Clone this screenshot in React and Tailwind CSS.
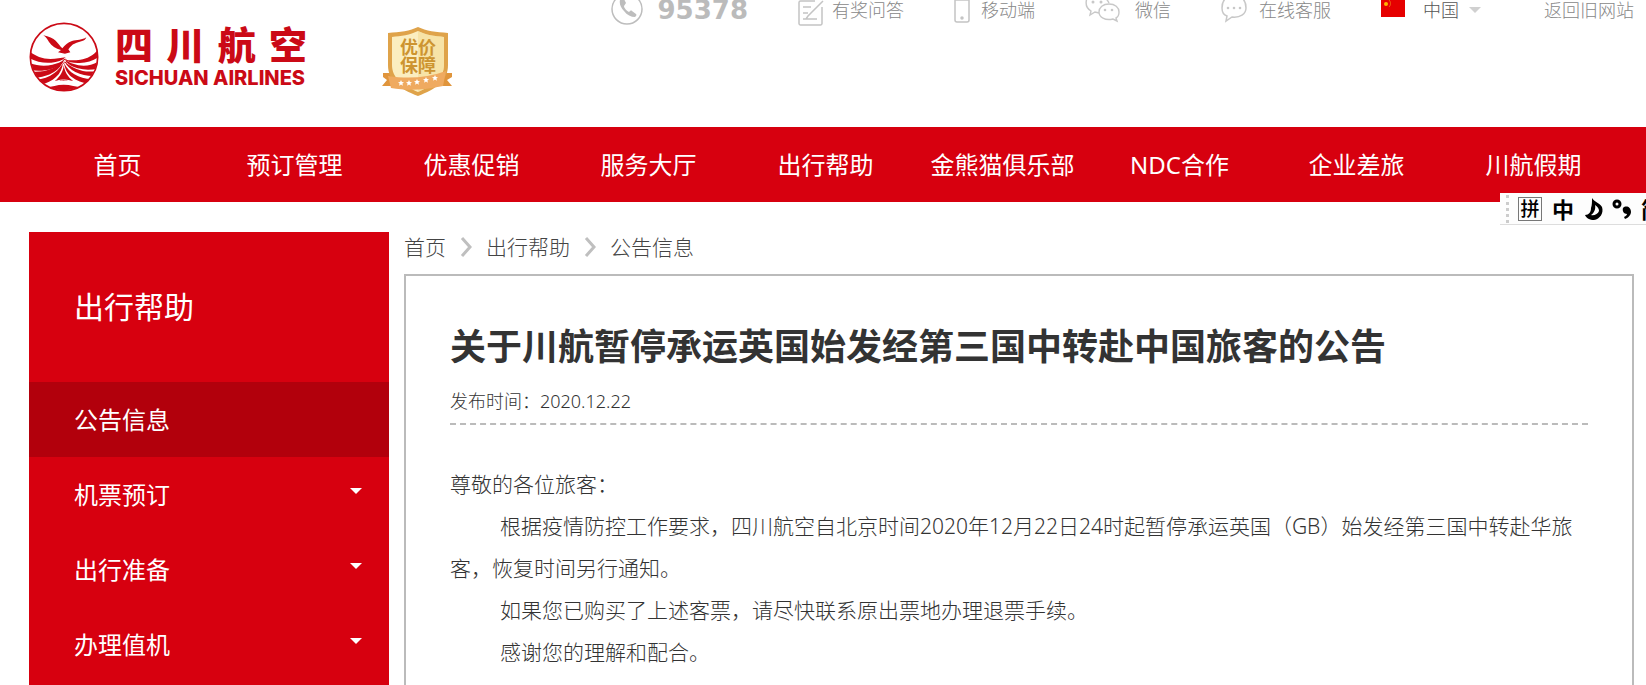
const navItems = [
  "首页",
  "预订管理",
  "优惠促销",
  "服务大厅",
  "出行帮助",
  "金熊猫俱乐部",
  "NDC合作",
  "企业差旅",
  "川航假期",
];

const sideItems = [
  { label: "公告信息", active: true },
  { label: "机票预订" },
  { label: "出行准备" },
  { label: "办理值机" },
];

const Logo = () => (
  <a href="#" className="flex items-start text-[#cb0a16]">
    <svg viewBox="86 65 210 210" className="h-[70px] w-[70px]" fill="none">
      <defs>
        <clipPath id="logoClip">
          <circle cx="191" cy="170" r="100" />
        </clipPath>
      </defs>
      <circle cx="191" cy="170" r="101" stroke="currentColor" strokeWidth="5" />
      {/* bird */}
      <path
        fill="currentColor"
        d="M129 105c16 3 30 9 37 16 8 8 12 15 20 23 8-9 16-18 29-22 14-3 31-3 43-11-3 12-20 13-31 17-13 5-17 12-23 19l6 9-16 4-21-4 9-7c-16-4-28-12-36-24-4-7-8-14-17-20z"
      />
      {/* waves */}
      <g clipPath="url(#logoClip)" fill="currentColor">
        <path d="M84 148c14 17 40 27 66 28 18 0 32-3 46-5-10 10-25 14-43 16-25 2-49-3-69-15z" />
        <path d="M84 186c24 11 50 12 72 7 14-3 26-9 37-15-10 13-22 22-38 27-22 7-43 8-64 4z" />
        <path d="M92 214c24 2 45-1 65-10 13-6 23-14 33-24-6 15-15 27-29 35-18 11-36 16-60 17z" />
        <path d="M106 238c22-1 40-8 56-20 11-8 19-18 26-31-2 18-9 32-21 43-13 12-27 19-47 24z" />
        <path d="M298 142c-16 22-35 33-58 36-17 3-31 2-46 1 10 6 26 10 44 9 23-1 43-8 60-20z" />
        <path d="M298 181c-20 14-42 18-64 14-15-3-27-8-40-15 10 13 22 20 38 24 23 6 43 5 62 0z" />
        <path d="M292 211c-23 5-44 3-63-5-14-5-25-12-37-24 8 16 19 26 33 33 19 9 38 13 59 12z" />
        <path d="M280 236c-23 1-41-4-58-14-13-8-22-18-31-34 3 19 10 31 22 41 16 12 33 19 55 21z" />
        <path d="M190 195c-1 18-10 33-26 47h54c-16-12-25-28-28-47z" />
        <path d="M138 262c17-3 31-9 52-9s37 6 54 9l-20 12h-66z" />
      </g>
      <path stroke="#fff" strokeWidth="3" d="M154 248c12-6 24-9 36-9s28 4 41 9" />
      <path stroke="currentColor" strokeWidth="3" d="M190 190c-8-8 2-16 8-12s-1 11-6 8" />
    </svg>
    <span className="ml-4 block">
      <span className="flex w-[192px] justify-between text-[38px] leading-[44px] font-black">
        <span>四</span>
        <span>川</span>
        <span>航</span>
        <span>空</span>
      </span>
      <span className="block font-[Inter,sans-serif] text-xl leading-6 font-extrabold">
        SICHUAN AIRLINES
      </span>
    </span>
  </a>
);

const Badge = () => (
  <svg viewBox="0 0 72 72" className="ml-[74px] mt-1 h-[72px] w-[72px]">
    <path fill="#e0953c" d="M2 47h12v13H1l5-6-4-3zM71 47H59v13h12l-5-6 5-3z" />
    <path fill="#dfa34a" d="M37 1c8 4 18 5 30 6v32c0 16-12 24-30 31C19 63 7 55 7 39V7c12-1 22-2 30-6z" />
    <path fill="#fbeec0" d="M37 5c8 4 17 5 26 6v28c0 13-10 20-26 27C21 59 11 52 11 39V11c9-1 18-2 26-6z" />
    <path fill="#f2d48a" d="M37 5c8 4 17 5 26 6v28c0 13-10 20-26 27z" opacity=".45" />
    <text textAnchor="middle" fontSize="18" fontWeight="700" fill="#cd9430">
      <tspan x="37" y="28">
        优价
      </tspan>
      <tspan x="37" y="46">
        保障
      </tspan>
    </text>
    <path fill="#efaa60" d="M7 50c20 3 39 2 58-5l-3 15c-18 4-35 5-52 2z" />
    <g fill="#fff">
      {[
        [20, 57],
        [28, 57],
        [36, 56],
        [45, 54],
        [54, 52],
      ].map(([x, y]) => (
        <path
          key={x}
          transform={`translate(${x} ${y})`}
          d="M0-3l.9 2 2.1.2-1.6 1.4.5 2.1L0 1.600l-1.900 1.100.5-2.100L-3-.8l2.100-.2z"
        />
      ))}
    </g>
  </svg>
);

const TopLinks = () => (
  <div className="ml-auto flex items-start gap-[50px] text-[18px] leading-5 font-light whitespace-nowrap text-[#888]">
    <a href="tel:95378" className="flex items-start gap-[15px]">
      <svg viewBox="0 0 32 26" className="h-[26px] w-8" fill="none">
        <circle cx="16" cy="9" r="15" stroke="#bdbdbd" strokeWidth="1.500" />
        <path
          fill="#bdbdbd"
          d="M9 0c-1 4 1 8 4 11 3 4 7 6 11 6 1-1 2-2 1-3l-4-3c-1-1-2 0-3 1-2-1-5-4-5-6l2-3-2-4z"
        />
      </svg>
      <span className="font-['DejaVu_Sans',sans-serif] text-[26px] font-bold text-[#bbb]">
        95378
      </span>
    </a>
    <a href="#" className="flex items-start gap-2">
      <svg viewBox="0 0 26 26" className="h-[26px] w-[26px]" fill="none" stroke="#c4c4c4" strokeWidth="1.500">
        <path d="M17 1H2.500A1.500 1.500 0 0 0 1 2.500v21A1.500 1.500 0 0 0 2.500 25h20a1.500 1.500 0 0 0 1.500-1.500V7M25 1L10 16l-2 3M5 7h8M5 13h5M5 19h14" />
      </svg>
      有奖问答
    </a>
    <a href="#" className="flex items-start gap-[11px]">
      <svg viewBox="0 0 16 24" className="h-6 w-4" fill="none" stroke="#c4c4c4" strokeWidth="1.500">
        <rect x="1" y="-4" width="14" height="26" rx="2" />
        <path d="M1 0h14" />
        <circle cx="8" cy="18" r="1" fill="#bdbdbd" />
      </svg>
      移动端
    </a>
    <a href="#" className="flex items-start gap-[15px]">
      <svg viewBox="0 0 35 23" className="h-[23px] w-[35px]" fill="none" stroke="#c8c8c8" strokeWidth="1.400">
        <path d="M2-2c-2 6-1 10 4 13l-1 4 5-3 4 1M24 3c-1-2-2-4-5-6" />
        <path d="M24 4c6 0 10 3.500 10 8 0 3-1 5-3 6l1 3-4-2c-8 2-14-2-14-7 0-4.500 4-8 10-8z" />
        <g fill="#c8c8c8" stroke="none">
          <circle cx="8" cy="2" r="1.500" />
          <circle cx="16" cy="2" r="1.500" />
          <circle cx="20" cy="10" r="1.300" />
          <circle cx="27" cy="10" r="1.300" />
        </g>
      </svg>
      微信
    </a>
    <a href="#" className="flex items-start gap-3">
      <svg viewBox="0 0 26 23" className="h-[23px] w-[26px]" fill="none" stroke="#c8c8c8" strokeWidth="1.500">
        <path d="M4-1C2 1 1 4 1 8c0 4 2 7 5 8l-1 5 6-4c8 1 14-3 14-9 0-4-1-7-3-9" />
        <g fill="#c8c8c8" stroke="none">
          <circle cx="7" cy="8" r="1.300" />
          <circle cx="13" cy="8" r="1.300" />
          <circle cx="19" cy="8" r="1.300" />
        </g>
      </svg>
      在线客服
    </a>
    <button type="button" className="flex items-start text-[#555]">
      <svg viewBox="0 0 24 17" className="mr-[18px] h-[17px] w-6">
        <rect width="24" height="17" fill="#e60000" />
        <circle cx="5" cy="4" r="2" fill="#ffb400" />
        <path stroke="#f06a10" strokeWidth="1" fill="none" d="M8 0c2 2 2 5 0 7" />
      </svg>
      中国
      <svg viewBox="0 0 12 6" className="ml-[10px] mt-[7px] h-[6px] w-3">
        <path fill="#d0d0d0" d="M0 0h12L6 6z" />
      </svg>
    </button>
    <a href="#" className="ml-[13px]">
      返回旧网站
    </a>
  </div>
);

const InputBar = () => (
  <div className="absolute top-full right-0 -mt-[9px] flex h-8 w-[146px] items-center overflow-hidden border-b border-[#ddd] bg-[#fdfdfd] pl-[6px] text-[22px] leading-6 font-bold whitespace-nowrap text-black">
    <span className="mr-[9px] h-7 border-l-3 border-dotted border-[#ccc]" />
    <span className="flex h-6 w-6 shrink-0 items-center justify-center border border-[#777] text-[19px] font-medium">
      拼
    </span>
    <span className="ml-[10px]">中</span>
    <svg viewBox="0 0 20 22" className="ml-[10px] h-[22px] w-5 shrink-0">
      <path
        fillRule="evenodd"
        d="M8 0c2 4 8 5 10 9 2 6-2 12-8 13-4 0-8-2-9-5 4 0 6-3 6-7C8 7 8 4 8 0zM11 7c1 4-1 8-4 10 3 1 7-1 8-4 0-2-1-4-4-6z"
      />
    </svg>
    <svg viewBox="0 0 20 22" className="ml-2 h-[22px] w-5 shrink-0">
      <circle cx="5" cy="6" r="3" fill="none" stroke="#000" strokeWidth="3" />
      <path d="M11 10c3-3 8-1 8 4 0 3-3 6-6 7l-1-2c2-1 3-2 3-3-3 0-5-3-4-6z" />
    </svg>
    <span className="ml-[9px]">简</span>
  </div>
);

const Crumb = ({ children }) => (
  <>
    <svg viewBox="0 0 12 20" className="h-5 w-3" fill="none" stroke="#bfbfbf" strokeWidth="3">
      <path d="M2 1l8 9-8 9" />
    </svg>
    <a href="#">{children}</a>
  </>
);

const App = () => {
  return (
    <div className="flex min-h-screen flex-col overflow-hidden bg-white font-['Noto_Sans','Noto_Sans_CJK_SC',sans-serif] text-[#333]">
      <header className="relative">
        <div className="flex h-[127px] items-start pr-3 pl-[29px]">
          <div className="flex items-start pt-[22px]">
            <Logo />
            <Badge />
          </div>
          <TopLinks />
        </div>
        <nav className="grid h-[75px] grid-cols-9 items-center bg-[#d7000f] pr-6 pl-[29px] text-center text-2xl text-white">
          {navItems.map((item) => (
            <a key={item} href="#" className="whitespace-nowrap">
              {item}
            </a>
          ))}
        </nav>
        <InputBar />
      </header>

      <main className="flex flex-1 gap-[15px] pt-[30px] pr-3 pl-[29px]">
        <aside className="w-[360px] shrink-0 bg-[#d7000f] text-white">
          <h2 className="flex h-[150px] items-center pl-[45px] text-3xl">出行帮助</h2>
          <ul>
            {sideItems.map(({ label, active }) => (
              <li key={label}>
                <a
                  href="#"
                  className={`flex h-[75px] items-center justify-between pr-[27px] pl-[45px] text-2xl ${
                    active ? "bg-[#b2000c]" : ""
                  }`}
                >
                  {label}
                  {!active && (
                    <svg viewBox="0 0 12 6" className="mb-2 h-[6px] w-3" fill="currentColor">
                      <path d="M0 0h12L6 6z" />
                    </svg>
                  )}
                </a>
              </li>
            ))}
          </ul>
        </aside>

        <section className="flex min-w-0 flex-1 flex-col">
          <div className="flex h-[42px] items-start gap-[14px] text-[21px] leading-[30px] font-light text-[#444]">
            <a href="#">首页</a>
            <div className="flex items-center gap-[14px]">
              <Crumb>出行帮助</Crumb>
              <Crumb>公告信息</Crumb>
            </div>
          </div>
          <article className="flex-1 border-2 border-b-0 border-[#bbb] px-11 pt-[47px]">
            <h1 className="text-4xl leading-[48px] font-bold">
              关于川航暂停承运英国始发经第三国中转赴中国旅客的公告
            </h1>
            <p className="border-b-2 border-dashed border-[#bbb] pt-4 pb-2 text-[18px] leading-7 font-light">
              发布时间：2020.12.22
            </p>
            <div className="mt-[38px] text-[21px] leading-[42px] font-light">
              <p>尊敬的各位旅客：</p>
              <p className="indent-[50px]">
                根据疫情防控工作要求，四川航空自北京时间2020年12月22日24时起暂停承运英国（GB）始发经第三国中转赴华旅客，恢复时间另行通知。
              </p>
              <p className="indent-[50px]">如果您已购买了上述客票，请尽快联系原出票地办理退票手续。</p>
              <p className="indent-[50px]">感谢您的理解和配合。</p>
            </div>
          </article>
        </section>
      </main>
    </div>
  );
};

export default App;
